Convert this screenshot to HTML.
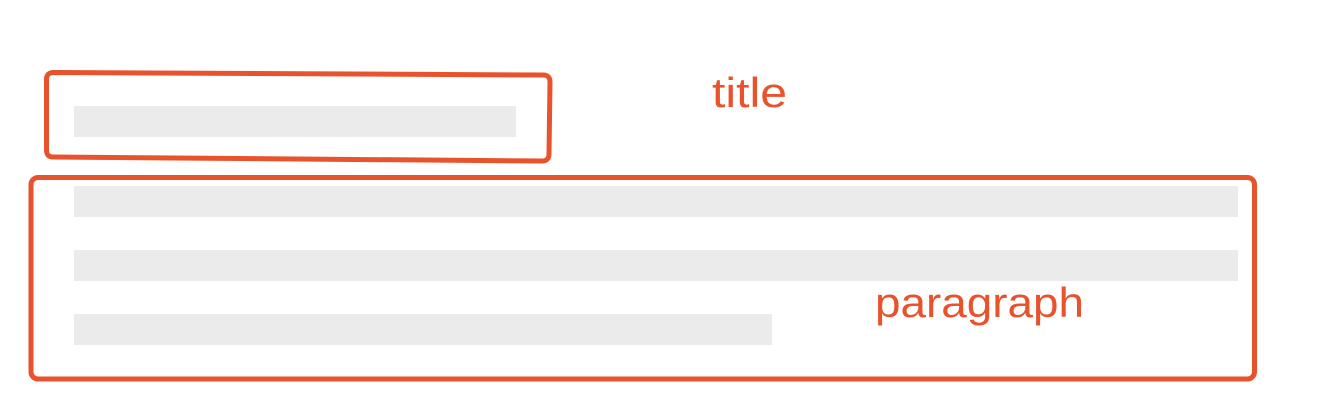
<!DOCTYPE html>
<html><head><meta charset="utf-8"><style>
html,body{margin:0;padding:0;background:#fff;width:1324px;height:420px;overflow:hidden}
svg{display:block}
</style></head><body>
<svg width="1324" height="420" viewBox="0 0 1324 420" xmlns="http://www.w3.org/2000/svg">
<rect x="74" y="106" width="442" height="31" fill="#ebebeb"/>
<rect x="74" y="186" width="1164" height="31" fill="#ebebeb"/>
<rect x="74" y="250" width="1164" height="31" fill="#ebebeb"/>
<rect x="74" y="314" width="698" height="31" fill="#ebebeb"/>
<path d="M54 72.5 L543 75 Q550 75 550 82 L549 154 Q549 161 542 161 L53 157 Q46.5 157 46.5 150 L46.5 79 Q46.5 72.5 54 72.5 Z" fill="none" stroke="#e8532d" stroke-width="5" stroke-linejoin="round"/>
<rect x="31" y="177.5" width="1223.5" height="201.5" rx="7" fill="none" stroke="#e8532d" stroke-width="5"/>
<text x="712" y="107" font-family="Liberation Sans, sans-serif" font-size="42" fill="#e8532d" textLength="75" lengthAdjust="spacingAndGlyphs">title</text>
<text x="875" y="317" font-family="Liberation Sans, sans-serif" font-size="42" fill="#e8532d" textLength="209" lengthAdjust="spacingAndGlyphs">paragraph</text>
</svg>
</body></html>
